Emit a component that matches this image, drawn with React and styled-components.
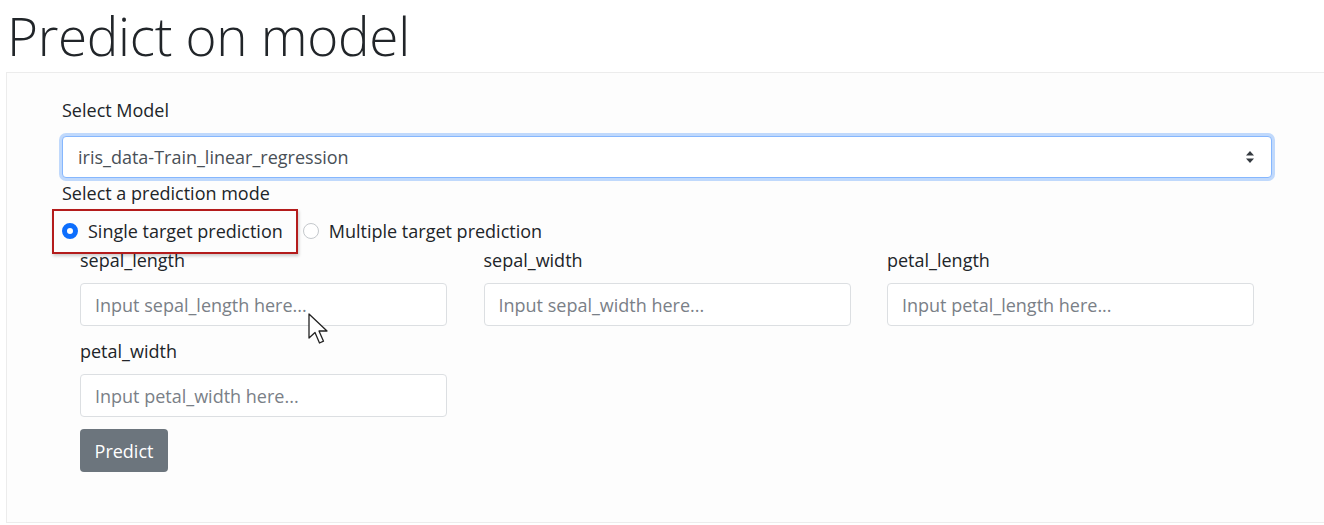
import React from 'react'
import styled, { createGlobalStyle } from 'styled-components';

const GlobalStyle = createGlobalStyle`
html, body {
    margin:0;
    padding:0;
    background:#fff;
    overflow:hidden;
}
body {
    font-family: "Open Sans", "Noto Sans", sans-serif;
    color:#212529;
}
`;

const Page = styled.div`
width:1324px;
height:525px;
`;
const Title = styled.h1`
margin:0;
padding:6px 0 0 7px;
height:72px;
box-sizing:border-box;
font-weight:300;
font-size:53px;
line-height:60px;
color:#212529;
letter-spacing:-0.3px;
`;
const Card = styled.div`
position:relative;
margin-left:6px;
height:451px;
box-sizing:border-box;
border:1px solid #ececec;
border-right:none;
background:#fdfdfd;
padding:24px 0 0 55px;
`;
const Label = styled.div`
font-size:18px;
line-height:26px;
color:#212529;
`;
const SelectBox = styled.div`
width:1210px;
height:42px;
margin-top:13px;
box-sizing:border-box;
border:1px solid #86b7fe;
border-radius:4px;
box-shadow:0 0 0 3px rgba(13,110,253,0.25);
background:#fff;
display:flex;
align-items:center;
justify-content:space-between;
padding:0 16px 0 15px;
font-size:18px;
color:#495057;
`;
const ModeLabel = styled(Label)`
margin-top:2px;
`;
const RadioRow = styled.div`
display:flex;
align-items:center;
height:28px;
margin-top:11px;
`;
const RadioOption = styled.label`
position:relative;
display:flex;
align-items:center;
gap:10px;
margin-right:20px;
font-size:18px;
line-height:26px;
color:#212529;

${p => p.highlighted && `
&::after{
    content:'';
    position:absolute;
    left:-10px;
    top:-9px;
    right:-15px;
    bottom:-10px;
    border:2px solid #b41c1c;
    box-shadow:1px 2px 3px rgba(0,0,0,0.2);
}
`}
`;
const RadioDot = styled.span`
width:16px;
height:16px;
box-sizing:border-box;
border-radius:50%;
border:${p => p.checked ? '5px solid #0d6efd' : '1px solid #c4c8cc'};
background:#fff;
`;
const Fields = styled.div`
display:grid;
grid-template-columns:repeat(3, 367px);
column-gap:36.5px;
row-gap:12px;
margin:2px 0 0 18px;
`;
const Field = styled.div`
display:flex;
flex-direction:column;
gap:10px;
`;
const Input = styled.input`
height:43px;
box-sizing:border-box;
border:1px solid #dcdfe2;
border-radius:4px;
padding:0 14px;
font-family:inherit;
font-size:18px;
background:#fff;
color:#495057;
outline:none;
&::placeholder{
    color:#7a8087;
}
`;
const Button = styled.button`
margin:12px 0 0 18px;
width:88px;
height:43px;
border:none;
border-radius:4px;
background:#6c757d;
color:#fff;
font-family:inherit;
font-size:18px;
font-weight:500;
`;
const Cursor = styled.svg`
position:absolute;
left:300px;
top:239px;
pointer-events:none;
`;

const Caret = () => (
    <svg width="10" height="14" viewBox="0 0 10 14">
        <path d="M5 1 L9 5.5 H1 Z" fill="#343a40" />
        <path d="M5 13 L9 8.5 H1 Z" fill="#343a40" />
    </svg>
);

const features = ['sepal_length', 'sepal_width', 'petal_length', 'petal_width'];

export default function App() {
    return (
        <Page>
            <GlobalStyle />
            <Title>Predict on model</Title>
            <Card>
                <Label>Select Model</Label>
                <SelectBox>
                    <span>iris_data-Train_linear_regression</span>
                    <Caret />
                </SelectBox>
                <ModeLabel>Select a prediction mode</ModeLabel>
                <RadioRow>
                    <RadioOption highlighted>
                        <RadioDot checked />
                        Single target prediction
                    </RadioOption>
                    <RadioOption>
                        <RadioDot />
                        Multiple target prediction
                    </RadioOption>
                </RadioRow>
                <Fields>
                    {features.map(f => (
                        <Field key={f}>
                            <Label>{f}</Label>
                            <Input placeholder={`Input ${f} here...`} />
                        </Field>
                    ))}
                </Fields>
                <Button>Predict</Button>
                <Cursor width="24" height="34" viewBox="0 0 24 34">
                    <path d="M2 2 L2 26 L8 20.5 L12.5 31 L16.5 29.2 L12 19 L20 19 Z" fill="#fff" stroke="#222" strokeWidth="1.3" strokeLinejoin="round" />
                </Cursor>
            </Card>
        </Page>
    )
}
